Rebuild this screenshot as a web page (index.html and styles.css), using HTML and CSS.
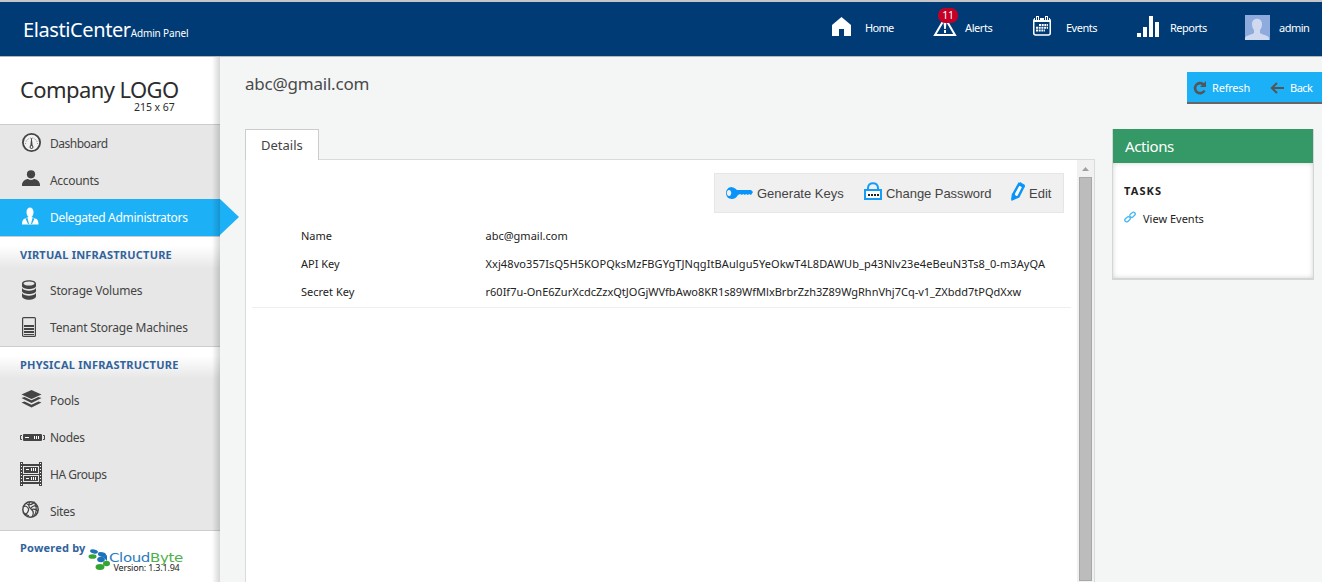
FILE: index.html
```html
<!DOCTYPE html>
<html lang="en">
<head>
<meta charset="utf-8">
<title>ElastiCenter Admin Panel</title>
<link rel="stylesheet" href="styles.css">
</head>
<body>
<header class="topbar">
  <div class="brand"><span class="brand-name">ElastiCenter</span><span class="brand-sub">Admin Panel</span></div>
  <nav class="topnav">
    <a class="top-item home"><svg width="20" height="20" viewBox="0 0 20 20"><path fill="#fff" d="M9.500 0 19 8V19H12V12H7V19H0V8Z"/></svg><span>Home</span></a>
    <a class="top-item alerts"><svg width="24" height="20" viewBox="0 0 24 20"><path fill="none" stroke="#fff" stroke-width="2" d="M12 1 22 18H2Z"/><path fill="#fff" d="M10.500 5h3l-.7 7h-1.600zM11 13h2v3h-2z"/></svg><span>Alerts</span><b class="badge">11</b></a>
    <a class="top-item events"><svg width="19" height="20" viewBox="0 0 19 20"><rect x="1.750" y="3" width="16.500" height="16" rx="2" fill="none" stroke="#fff" stroke-width="1.500"/><path fill="#fff" d="M2 2h16v4H2zM4 0h3v5H4zM13 0h3v5h-3z"/><path stroke="#003b75" d="M5.500 1v3M14.500 1v3M3.500 2v2M7.500 2v2M12.500 2v2M16.500 2v2"/><path stroke="#fff" stroke-width="2" stroke-dasharray="2 .7" d="M7 9h9M4 11.700h12M4 14.400h9"/></svg><span>Events</span></a>
    <a class="top-item reports"><svg width="22" height="22" viewBox="0 0 22 22"><path fill="#fff" d="M0 17h4v4H0zM6 11h4v10H6zM12 0h4v21h-4zM18 6h4v15h-4z"/></svg><span>Reports</span></a>
    <a class="top-item admin"><svg width="25" height="25" viewBox="0 0 25 25"><path fill="#8faadc" d="M0 0h25v25H0z"/><path fill="#cfdaf0" d="M7 9c0-7 10-7 10 0 0 3-1 5-2 6v3c3 2 8 2 9 5v2H0v-2c1-3 6-3 9-5v-3C8 14 7 12 7 9Z"/></svg><span>admin</span></a>
  </nav>
</header>
<div class="layout">
  <aside class="sidebar">
    <div class="company"><div class="company-name">Company LOGO</div><div class="company-size">215 x 67</div></div>
    <nav class="menu">
      <a class="item dash"><svg class="icon up1" width="25" height="20" viewBox="0 0 25 20"><circle cx="11.500" cy="9.500" r="8.600" fill="#f2f2f2" stroke="#444" stroke-width="1.800"/><path fill="none" stroke="#777" stroke-dasharray="1 1.500" d="M5.500 11a6 6 0 1 1 12 0"/><path fill="#444" d="M11.200 5h.6l1 9h-2.600z"/><circle cx="11.500" cy="14" r="1.500" fill="#eee" stroke="#444"/></svg><span>Dashboard</span></a>
      <a class="item accounts"><svg class="icon up" width="25" height="18" viewBox="0 0 25 18"><circle cx="11" cy="4.300" r="4.100" fill="#444"/><path fill="#444" d="M2 16v-1c0-4 4-6 6-6 2 1.300 4 1.300 6 0 2 0 6 2 6 6v1z"/></svg><span>Accounts</span></a>
      <a class="item active"><svg class="icon up" width="25" height="18" viewBox="0 0 25 18"><path fill="#fff" d="M6.500 5c0-6 7-6 7 0 0 3-1 4-2 5l5 2q2 1 2 5.500H2Q2 13 4 12l4.500-2C7.500 9 6.500 8 6.500 5Z"/><path fill="#1cb0f6" d="M7.500 11 9 17H8L5.500 11.500zM12.500 11 11 17h1l2.500-5.500z"/></svg><span>Delegated Administrators</span></a>
      <h3>VIRTUAL INFRASTRUCTURE</h3>
      <a class="item storage"><svg class="icon up1" width="25" height="20" viewBox="0 0 25 20"><path fill="#444" d="M2 3.500C2-1 16-1 16 3.500V6c0 4-14 4-14 0zM2 8c2 3.500 12 3.500 14 0v3c0 4-14 4-14 0zM2 13c2 3.500 12 3.500 14 0v3c0 5-14 5-14 0z"/><ellipse cx="9" cy="3.500" rx="5.500" ry="2" fill="#e6e6e6"/></svg><span>Storage Volumes</span></a>
      <a class="item tenant"><svg class="icon up1" width="25" height="20" viewBox="0 0 25 20"><rect x="2.600" y=".6" width="12.800" height="18.800" rx="1" fill="none" stroke="#444" stroke-width="1.200"/><path stroke="#444" stroke-width="2" d="M4 9h10M4 12h10M4 15h10"/><path stroke="#444" d="M4 17.500h10"/></svg><span>Tenant Storage Machines</span></a>
      <h3>PHYSICAL INFRASTRUCTURE</h3>
      <a class="item pools"><svg class="icon up" width="25" height="20" viewBox="0 0 25 20"><path fill="#444" d="M11.500 1 21.500 5.500 11.500 10 1.500 5.500zM1.500 9l3-1 7 3.200L18.500 8l3 1-10 5zM1.500 13.500l3-1 7 3.200 7-3.200 3 1-10 5z"/></svg><span>Pools</span></a>
      <a class="item nodes"><svg class="icon" width="25" height="7" viewBox="0 0 25 7"><rect x="3" width="19" height="7" rx="1" fill="#444"/><path fill="none" stroke="#444" d="M2 1.500H.5v4H2M23 1.500h1.500v4H23"/><path stroke="#fff" d="M5 3.500h4M14.500 2v3M16.500 2v3M18.500 2v3"/></svg><span>Nodes</span></a>
      <a class="item ha"><svg class="icon up1" width="25" height="24" viewBox="0 0 25 24"><path fill="#444" d="M0 0h3v24H0zM19 0h3v24h-3zM3 2h16v2H3zM3 20h16v2H3zM4 5h14v6H4zM4 14h14v5H4zM3 12h16v1H3z"/><path stroke="#fff" d="M6 7.500h3M11.500 6v3M13.500 6v3M15.500 6v3M6 16.500h3M11.500 15v3M13.500 15v3M15.500 15v3"/><path stroke="#fff" stroke-dasharray="1 2" d="M1.500 1v22M20.500 1v22"/></svg><span>HA Groups</span></a>
      <a class="item sites"><svg class="icon up" width="25" height="17" viewBox="0 0 25 17"><circle cx="10.500" cy="8.500" r="7.700" fill="#eee" stroke="#444" stroke-width="1.500"/><path fill="none" stroke="#444" stroke-width="1.200" d="M6 2q3 4 9-1M10 1q-3 4 1 7t1 8M3 6q3-2 5 1t-3 7M10 8q4-5 7-2M11 9q3-2 7 1M15 3q3 6-1 12M4 12l5 3"/></svg><span>Sites</span></a>
    </nav>
    <footer class="powered"><span class="powered-by">Powered by</span>
      <div class="vendor">
        <svg width="100" height="22" viewBox="0 0 100 22"><g fill="#1d73bb"><ellipse cx="6" cy="2.500" rx="4" ry="2" transform="rotate(12 6 2.500)"/><ellipse cx="14" cy="5.500" rx="4.200" ry="2.300" transform="rotate(15 14 5.500)"/><ellipse cx="13" cy="10.500" rx="3.800" ry="2.700"/><path d="m15 8 4-2v6z"/></g><g fill="#35a532"><ellipse cx="4.500" cy="7.500" rx="4" ry="2.300"/><ellipse cx="18.500" cy="14.500" rx="3.500" ry="2.800"/><ellipse cx="12" cy="18" rx="4.500" ry="3"/></g></svg>
        <span class="vendor-name">Cloud<i>Byte</i></span><span class="version">Version: 1.3.1.94</span>
      </div>
    </footer>
  </aside>
  <main class="content">
    <div class="title-row"><h1>abc@gmail.com</h1>
      <div class="page-actions">
        <a class="refresh"><svg width="14" height="14" viewBox="0 0 14 14"><path fill="none" stroke="#555" stroke-width="2.600" d="M10.500 3.500A5 5 0 1 0 11.500 9.500"/><path fill="#555" d="M13 0v6H7z"/></svg><span>Refresh</span></a>
        <a class="back"><svg width="14" height="12" viewBox="0 0 14 12"><path fill="none" stroke="#555" stroke-width="2" d="M7 1 1.800 6 7 11M2 6h12"/></svg><span>Back</span></a>
      </div>
    </div>
    <div class="columns">
      <section class="details">
        <div class="tab"><span>Details</span></div>
        <div class="panel">
          <div class="panel-body">
            <div class="toolbar">
              <a class="gen"><svg width="29" height="14" viewBox="0 0 29 14"><path fill="#0894f8" fill-rule="evenodd" d="M6 1c3 0 5 1 7 3h14l2 2-2 3-2-1-1 1-2-1-1 1-2-1-1 1-2-1-2 1c-2 3-4 4-6 4-8 0-8-12 0-12M5 4C2 4 2 10 5 10S8 4 5 4Z"/></svg><span>Generate Keys</span></a>
              <a class="pwd"><svg width="18" height="19" viewBox="0 0 18 19"><path fill="none" stroke="#149df7" stroke-width="2" d="M4 8V6c0-6.500 10-6.500 10 0v2"/><path fill="#fff" stroke="#149df7" stroke-width="2" d="M1 8h16v9H1z"/><path stroke="#222" stroke-width="2" stroke-dasharray="2 1" d="M4 13h11"/></svg><span>Change Password</span></a>
              <a class="edit"><svg width="14" height="19" viewBox="0 0 14 19"><path fill="#fff" stroke="#0894f8" stroke-width="2.400" d="m8 2 4.500 2.500-5 10L2 17l1-6z"/><path fill="#0894f8" d="m7 3 6 3 1-3-5-3zM0 18l1-7 6 4z"/></svg><span>Edit</span></a>
            </div>
            <dl class="fields">
              <dt>Name</dt><dd class="name-value">abc@gmail.com</dd>
              <dt>API Key</dt><dd class="api-value">Xxj48vo357IsQ5H5KOPQksMzFBGYgTJNqgItBAulgu5YeOkwT4L8DAWUb_p43Nlv23e4eBeuN3Ts8_0-m3AyQA</dd>
              <dt>Secret Key</dt><dd class="secret-value">r60If7u-OnE6ZurXcdcZzxQtJOGjWVfbAwo8KR1s89WfMlxBrbrZzh3Z89WgRhnVhj7Cq-v1_ZXbdd7tPQdXxw</dd>
            </dl>
          </div>
          <div class="scrollbar"><svg width="17" height="17" viewBox="0 0 17 17"><path fill="#a0a0a0" d="M5 11 8.500 7 12 11z"/></svg><div class="thumb"></div></div>
        </div>
      </section>
      <aside class="actions">
        <h2>Actions</h2>
        <div class="actions-body"><h4>TASKS</h4>
          <a class="task"><svg width="12" height="12" viewBox="0 0 12 12"><g fill="none" stroke="#45b8f0" stroke-width="1.300"><rect x="5.500" y="2" width="6" height="3.600" rx="1.800" transform="rotate(-42 8.500 3.800)"/><rect x=".5" y="6.500" width="6" height="3.600" rx="1.800" transform="rotate(-42 3.500 8.300)"/></g></svg><span>View Events</span></a>
        </div>
      </aside>
    </div>
  </main>
</div>
</body>
</html>
```
FILE: styles.css
```css
* { box-sizing: border-box; }
body { margin: 0; height: 582px; overflow: hidden; background: #f4f6f6; color: #222; font-family: "Noto Sans", "Open Sans", sans-serif; font-size: 11px; }
h1, h2, h3, h4, dl, dd { margin: 0; font-weight: 400; }
svg { display: block; flex: none; }
span, h1, h2, h3, h4, dt, dd { white-space: nowrap; }

.topbar { display: flex; justify-content: space-between; height: 57px; background: #003b75; border-top: 2px solid #c5c6c8; border-bottom: 1px solid #b2b6ba; color: #fff; }
.brand { padding: 12px 0 0 23px; line-height: 32px; }
.brand-name { font-size: 20px; letter-spacing: -.4px; }
.brand-sub { font-size: 10px; letter-spacing: -.15px; }
.topnav { display: flex; width: 490px; height: 50px; font-size: 11px; letter-spacing: -.4px; }
.top-item { display: flex; align-items: center; position: relative; }
.home { width: 101px; gap: 13px; letter-spacing: -.7px; }
.alerts { width: 99px; gap: 8px; }
.events { width: 105px; gap: 15px; letter-spacing: -.5px; }
.reports { width: 108px; gap: 11px; letter-spacing: -.5px; }
.admin { gap: 9px; letter-spacing: -.5px; }
.events svg { margin-bottom: 2px; }
.badge { position: absolute; left: 5px; top: 6px; width: 20px; height: 15px; border-radius: 7px; background: #c40027; font-weight: 400; font-size: 10.5px; line-height: 15px; letter-spacing: -.2px; text-align: center; }

.layout { display: flex; height: 525px; }
.sidebar { position: relative; width: 220px; flex: none; background: #fff; }
.sidebar::after { content: ""; position: absolute; inset: 0 0 0 auto; width: 8px; background: linear-gradient(90deg, transparent, rgba(0,0,0,.16)); pointer-events: none; }
.company { height: 67px; padding: 17px 0 0 20px; color: #2c2c2c; }
.company-name { font-size: 22px; line-height: 30px; letter-spacing: -.6px; }
.company-size { margin: -4px 0 0 114px; font-size: 10.5px; line-height: 14px; letter-spacing: -.05px; }
.menu { background: #e7e7e7; border-top: 1px solid #ccc; border-bottom: 1px solid #ccc; color: #444; font-size: 12px; letter-spacing: -.3px; }
.item { display: flex; align-items: center; height: 37px; padding-left: 20px; gap: 5px; position: relative; }
.up { margin-bottom: 4px; }
.up1 { margin-bottom: 1px; }
.dash, .ha { letter-spacing: -.5px; }
.storage, .tenant { letter-spacing: -.2px; }
.active { background: #1cb0f6; color: #fff; }
.active::after { content: ""; position: absolute; left: 220px; top: 0; border: solid transparent; border-width: 18.500px 0 18.500px 19px; border-left-color: #1cb0f6; }
.menu h3 { height: 36px; padding-left: 20px; border-top: 1px solid #ccc; background: linear-gradient(#fff 25%, #e7e7e7 90%); color: #31639c; font-size: 11px; line-height: 35px; font-weight: 700; letter-spacing: .23px; }
.powered { display: flex; padding: 9px 0 0 20px; gap: 2px; }
.powered-by { color: #31639c; font-size: 11px; font-weight: 700; line-height: 16px; letter-spacing: .2px; }
.vendor { position: relative; margin-top: 9px; }
.vendor-name { position: absolute; left: 21px; top: 3px; color: #287bc0; font: 400 12px/12px "DejaVu Sans", sans-serif; transform: scaleX(1.25); transform-origin: 0 0; letter-spacing: -.3px; }
.vendor-name i { color: #4fb04b; font-style: normal; }
.version { position: absolute; left: 26px; top: 13px; color: #222; font-size: 9px; line-height: 12px; letter-spacing: -.2px; }

.content { flex: 1; min-width: 0; display: flex; flex-direction: column; padding-left: 25px; }
.title-row { display: flex; justify-content: space-between; height: 72px; padding-top: 15px; }
h1 { font-size: 17px; line-height: 24px; color: #4a4a4a; letter-spacing: -.22px; }
.page-actions { display: flex; align-items: center; width: 135px; height: 32px; padding-left: 6px; background: #1cb0f6; border-bottom: 2px solid #666; color: #fff; font-size: 11px; letter-spacing: -.2px; }
.page-actions a { display: flex; align-items: center; }
.refresh { width: 77px; gap: 5px; }
.back { gap: 6px; letter-spacing: -.5px; }
.page-actions svg { margin-top: 1px; }
.columns { display: flex; flex: 1; gap: 17px; min-height: 0; }
.details { width: 850px; display: flex; flex-direction: column; }
.tab { z-index: 1; width: 74px; height: 31px; margin-bottom: -1px; padding-left: 15px; background: #fff; border: 1px solid #ccc; border-bottom: 0; color: #444; font-size: 13px; line-height: 31px; }
.panel { display: flex; flex: 1; background: #fff; border: 1px solid #d9dbdb; border-bottom: 0; min-height: 0; }
.panel-body { width: 831px; }
.toolbar { display: flex; align-items: center; width: 350px; height: 40px; margin: 13px 0 0 468px; padding-left: 9px; background: #f0f0f0; border: 1px solid #e6e6e6; color: #444; font: 13px "Liberation Sans", sans-serif; }
.toolbar a { display: flex; align-items: center; }
.toolbar svg { margin-bottom: 3px; }
.toolbar .gen svg { margin-bottom: 1px; }
.gen { width: 140px; gap: 4px; }
.pwd { width: 147px; gap: 4px; letter-spacing: -.05px; }
.edit { gap: 4px; }
.fields { display: grid; grid-template-columns: 184.5px 1fr; margin: 9px 6px 0; padding: 0 0 1px 49px; border-bottom: 1px solid #eee; line-height: 28px; font-size: 11px; }
.api-value { letter-spacing: .09px; }
.scrollbar { width: 17px; background: #f1f1f1; }
.thumb { width: 13px; height: 404px; margin-left: 2px; background: #bcbcbc; border: 1px solid #a8a8a8; }
.actions { width: 202px; height: 151px; background: #fff; border: 1px solid #d4d6d6; border-width: 0 1px 2px; }
.actions h2 { height: 34px; padding-left: 12px; background: #349966; color: #fff; font-size: 15px; line-height: 35px; letter-spacing: -.4px; }
.actions-body { height: 115px; padding: 19px 0 0 11px; box-shadow: inset 0 0 5px rgba(0,0,0,.18); }
.actions h4 { font-size: 11px; line-height: 18px; font-weight: 700; letter-spacing: 1.1px; }
.task { display: flex; align-items: center; gap: 7px; height: 20px; margin-top: 8px; }
.task svg { margin-bottom: 2px; }
```
